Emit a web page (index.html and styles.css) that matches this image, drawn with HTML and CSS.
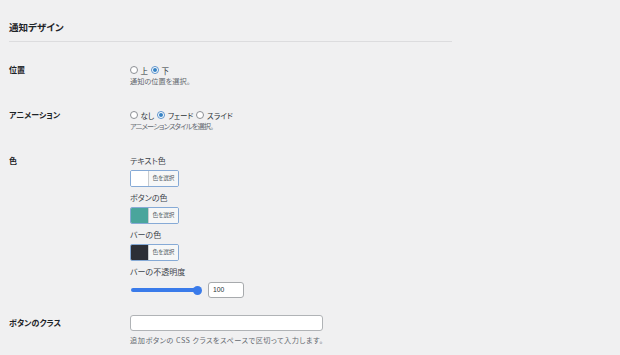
FILE: index.html
```html
<!DOCTYPE html>
<html lang="ja">
<head>
<meta charset="utf-8">
<title>通知デザイン</title>
<link rel="stylesheet" href="styles.css">
</head>
<body>
<div class="wrap">
  <h2 class="title">通知デザイン</h2>
  <div class="form">
    <div class="row row-position">
      <div class="label">位置</div>
      <div class="field">
        <div class="radios">
          <label class="radio"><span class="rb"></span>上</label>
          <label class="radio"><span class="rb checked"></span>下</label>
        </div>
        <p class="desc">通知の位置を選択。</p>
      </div>
    </div>
    <div class="row row-anim">
      <div class="label">アニメーション</div>
      <div class="field">
        <div class="radios">
          <label class="radio"><span class="rb"></span>なし</label>
          <label class="radio"><span class="rb checked"></span>フェード</label>
          <label class="radio"><span class="rb"></span>スライド</label>
        </div>
        <p class="desc desc-tight">アニメーションスタイルを選択。</p>
      </div>
    </div>
    <div class="row row-color">
      <div class="label">色</div>
      <div class="field">
        <div class="sublabel">テキスト色</div>
        <div class="colorbtn"><span class="swatch sw-white"></span><span class="cbtext">色を選択</span></div>
        <div class="sublabel gap">ボタンの色</div>
        <div class="colorbtn"><span class="swatch sw-teal"></span><span class="cbtext">色を選択</span></div>
        <div class="sublabel gap">バーの色</div>
        <div class="colorbtn"><span class="swatch sw-dark"></span><span class="cbtext">色を選択</span></div>
        <div class="sublabel gap">バーの不透明度</div>
        <div class="opacity">
          <div class="slider"><span class="track"></span><span class="thumb"></span></div>
          <div class="numbox">100</div>
        </div>
      </div>
    </div>
    <div class="row row-class">
      <div class="label label-input">ボタンのクラス</div>
      <div class="field">
        <div class="textbox"></div>
        <p class="desc desc-input">追加ボタンの CSS クラスをスペースで区切って入力します。</p>
      </div>
    </div>
  </div>
</div>
</body>
</html>
```

FILE: styles.css
```css
html, body {
  margin: 0;
  padding: 0;
  background: #f0f0f1;
}
body {
  font-family: "Noto Sans CJK JP", "Noto Sans", sans-serif;
  font-feature-settings: "palt";
  color: #1d2327;
}
.wrap {
  padding: 21px 0 0 9px;
  width: 443px;
}
.title {
  margin: 0;
  font-size: 9.5px;
  line-height: 12px;
  font-weight: 700;
  color: #1d2327;
  padding-bottom: 8px;
  border-bottom: 1px solid #dcdcde;
}
.form {
  padding-top: 22px;
  display: flex;
  flex-direction: column;
}
.row {
  display: grid;
  grid-template-columns: 121px 1fr;
}
.row-anim { margin-top: 23px; }
.row-color { margin-top: 24px; }
.row-class { margin-top: 17px; }
.label {
  font-size: 8px;
  line-height: 12px;
  font-weight: 700;
  color: #1d2327;
}
.label-input { padding-top: 2px; }
.radios {
  display: flex;
  align-items: center;
  height: 12px;
  font-size: 7.5px;
  color: #2c3338;
}
.radio {
  display: inline-flex;
  align-items: center;
  gap: 2.5px;
  margin-right: 3px;
}
.rb {
  width: 8px;
  height: 8px;
  box-sizing: border-box;
  border: 1px solid #8c8f94;
  border-radius: 50%;
  background: #fff;
  display: inline-flex;
  align-items: center;
  justify-content: center;
}
.rb.checked {
  border-color: #5b92cc;
}
.rb.checked::before {
  content: "";
  width: 4px;
  height: 4px;
  border-radius: 50%;
  background: #3582c4;
}
.desc {
  margin: 0;
  font-size: 7.2px;
  line-height: 10px;
  color: #646970;
}
.desc-tight { letter-spacing: -0.8px; }
.desc-input { margin-top: 4px; letter-spacing: 0.5px; }
.sublabel {
  font-size: 8px;
  line-height: 12px;
  color: #3c434a;
}
.sublabel.gap { margin-top: 5px; }
.colorbtn {
  margin-top: 3px;
  width: 49px;
  height: 17px;
  box-sizing: border-box;
  border: 1px solid #86aad6;
  border-radius: 2px;
  display: flex;
  overflow: hidden;
  background: #f6f7f7;
}
.swatch {
  width: 17px;
  flex: none;
}
.sw-white { background: #ffffff; }
.sw-teal { background: #4aa59c; }
.sw-dark { background: #2c2f36; }
.cbtext {
  flex: 1;
  border-left: 1px solid #c9cccf;
  font-size: 5.6px;
  line-height: 15px;
  text-align: center;
  color: #50575e;
  background: #f6f7f7;
}
.opacity {
  margin-top: 4px;
  display: flex;
  align-items: center;
  gap: 6px;
  height: 16px;
}
.slider {
  position: relative;
  width: 71px;
  height: 9px;
  margin-left: 1px;
}
.track {
  position: absolute;
  left: 0;
  right: 2px;
  top: 2.5px;
  height: 4px;
  border-radius: 2px;
  background: #3a7bea;
}
.thumb {
  position: absolute;
  right: 0;
  top: 0;
  width: 9px;
  height: 9px;
  border-radius: 50%;
  background: #3a7bea;
}
.numbox {
  width: 36px;
  height: 16px;
  box-sizing: border-box;
  border: 1px solid #a7aaad;
  border-radius: 3px;
  background: #fff;
  font-family: "Liberation Sans", "Noto Sans", sans-serif;
  font-size: 6.8px;
  line-height: 14px;
  padding-left: 4px;
  color: #2c3338;
}
.textbox {
  width: 193px;
  height: 16px;
  box-sizing: border-box;
  border: 1px solid #b0b3b6;
  border-radius: 3px;
  background: #fff;
}
```
